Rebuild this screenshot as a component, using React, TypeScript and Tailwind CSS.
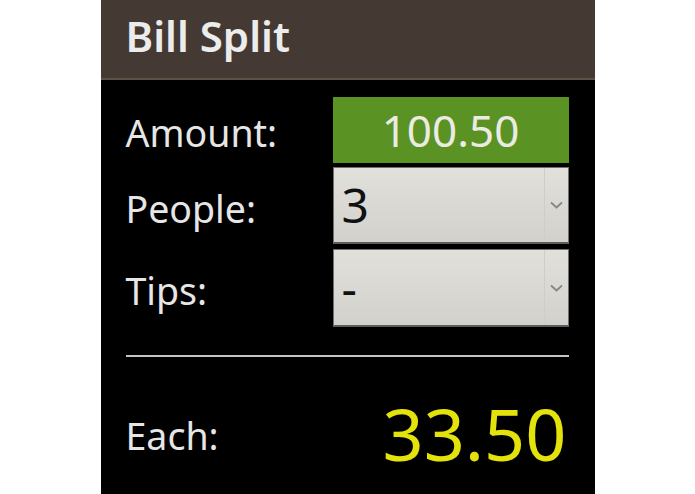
import React from 'react';

const font = { fontFamily: '"Noto Sans", "Open Sans", sans-serif' };

function Label({ children }: { children: React.ReactNode }) {
  return <span className="pt-[6px] text-[37.5px] leading-none text-[#e6e6e6]">{children}</span>;
}

function Spinner({ value }: { value: string }) {
  return (
    <div className="flex h-full items-center border border-[#707070] border-b-2 border-b-[#5c5c5c] bg-gradient-to-b from-[#e2e0db] to-[#d3d1cb]">
      <span className="flex-1 pl-[8px] text-[48px] leading-none text-[#111]">{value}</span>
      <div className="flex h-full w-[24px] items-center justify-center border-l border-[#cfcdc7]">
        <svg width="13" height="8" viewBox="0 0 13 8" fill="none">
          <path d="M1 1.5l5.5 5 5.5-5" stroke="#858585" strokeWidth="1.7" />
        </svg>
      </div>
    </div>
  );
}

export default function App() {
  const [amount] = React.useState(100.5);
  const [people] = React.useState(3);
  const each = (Math.ceil((amount / people) * 2) / 2).toFixed(2);

  return (
    <div className="flex h-[494px] w-[695px] justify-center bg-white" style={font}>
      <div className="flex w-[494px] flex-col bg-black">
        <header className="h-[80px] border-b-2 border-[#5e5044] bg-[#443a33] pl-[25px] pt-[11px]">
          <h1 className="text-[42px] font-semibold leading-[50px] text-[#ececec]">Bill Split</h1>
        </header>

        <div className="flex flex-col pl-[25px] pr-[26px] pt-[17px]">
          <div className="grid grid-cols-[207px_1fr] items-center h-[66px]">
            <Label>Amount:</Label>
            <div className="flex h-full items-center justify-center bg-[#5a9323] text-[44px] leading-none text-[#ebebe3]">
              {amount.toFixed(2)}
            </div>
          </div>
          <div className="mt-[4px] grid h-[77px] grid-cols-[207px_1fr] items-center">
            <Label>People:</Label>
            <Spinner value={String(people)} />
          </div>
          <div className="mt-[5px] grid h-[78px] grid-cols-[207px_1fr] items-center">
            <Label>Tips:</Label>
            <Spinner value="-" />
          </div>

          <div className="mt-[28px] h-[2px] bg-[#c4c4c4]" />

          <div className="mt-[40px] flex items-center justify-between">
            <Label>Each:</Label>
            <span className="pr-[2px] text-[72px] leading-none text-[#e3e30b]">{each}</span>
          </div>
        </div>
      </div>
    </div>
  );
}
